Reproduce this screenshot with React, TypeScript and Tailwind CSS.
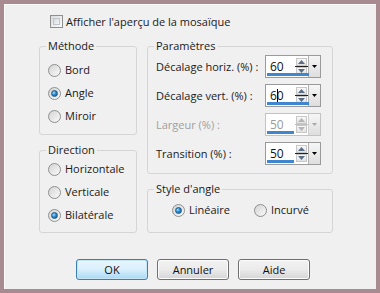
import React from "react";

const font = { fontFamily: '"Open Sans", "Noto Sans", sans-serif' };

function Radio({ checked, label, disabled }: { checked?: boolean; label: string; disabled?: boolean }) {
  return (
    <div className="flex items-center h-[16px]">
      <div className="w-[13px] h-[13px] rounded-full border border-[#8e8f8f] bg-gradient-to-br from-[#d4d4d4] to-[#fafafa] flex items-center justify-center shrink-0">
        {checked && (
          <div className="w-[7px] h-[7px] rounded-full bg-[radial-gradient(circle_at_35%_35%,#a8dcff_0%,#2c8bd0_45%,#0b4f82_100%)] border border-[#1d5a86]" />
        )}
      </div>
      <span className={`ml-[4px] text-[11px] leading-[16px] ${disabled ? "text-[#a0a0a0]" : "text-[#1a1a1a]"}`}>{label}</span>
    </div>
  );
}

function Spin({ value, bar, disabled, caret }: { value: string; bar: number; disabled?: boolean; caret?: boolean }) {
  const arrow = disabled ? "#b5b5b5" : "#5a6f86";
  return (
    <div className={`w-[56px] h-[23px] border ${disabled ? "border-[#c3c3c3]" : "border-[#9a9a9a]"} bg-white flex relative shrink-0`}>
      <div className="flex-1 relative">
        <span className={`absolute left-[4px] top-[3px] text-[12px] leading-[16px] ${disabled ? "text-[#9a9a9a]" : "text-[#111]"}`}>{value}</span>
        {caret && <div className="absolute left-[11px] top-[4px] w-[1px] h-[13px] bg-black" />}
        <div className="absolute left-[1px] bottom-[1px] h-[3px] bg-[#3f86d1]" style={{ width: bar }} />
      </div>
      <div className="w-[11px] flex flex-col justify-center mr-[1px] py-[2px]">
        <div className="flex-1 border border-[#c7c7c7] bg-gradient-to-b from-[#fafafa] to-[#e2e2e2] flex items-center justify-center">
          <svg width="7" height="4" viewBox="0 0 7 4"><path d="M0 4 L3.5 0 L7 4 Z" fill={arrow} /></svg>
        </div>
        <div className={`h-[1px] ${disabled ? "bg-[#c0c0c0]" : "bg-[#222]"} -mx-[1px]`} />
        <div className="flex-1 border border-[#c7c7c7] bg-gradient-to-b from-[#fafafa] to-[#e2e2e2] flex items-center justify-center">
          <svg width="7" height="4" viewBox="0 0 7 4"><path d="M0 0 L3.5 4 L7 0 Z" fill={arrow} /></svg>
        </div>
      </div>
      <div className={`w-[12px] border-l ${disabled ? "border-[#d0d0d0]" : "border-[#b0b0b0]"} bg-gradient-to-b from-[#f6f6f6] to-[#dedede] flex items-center justify-center`}>
        <svg width="5" height="3" viewBox="0 0 5 3"><path d="M0 0 L2.5 3 L5 0 Z" fill={disabled ? "#a8a8a8" : "#000"} /></svg>
      </div>
    </div>
  );
}

function Group({ title, className, inner, children }: { title: string; className: string; inner: string; children: React.ReactNode }) {
  return (
    <fieldset className={`border border-[#d5d5d5] rounded-[3px] ${className}`}>
      <legend className="ml-[6px] px-[2px] text-[11px] leading-[16px] text-[#1a1a1a]">{title}</legend>
      <div className={inner}>{children}</div>
    </fieldset>
  );
}

function Row({ label, disabled, children }: { label: string; disabled?: boolean; children: React.ReactNode }) {
  return (
    <div className="flex items-center justify-between h-[23px]">
      <span className={`text-[11px] leading-[16px] whitespace-nowrap ${disabled ? "text-[#a0a0a0]" : "text-[#1a1a1a]"}`}>{label}</span>
      {children}
    </div>
  );
}

function Button({ label, primary }: { label: string; primary?: boolean }) {
  return (
    <div
      className={`w-[72px] h-[21px] rounded-[3px] border flex items-center justify-center text-[11px] leading-[16px] text-[#111] ${
        primary
          ? "border-[#3c7fb1] bg-gradient-to-b from-[#eaf6fd] via-[#d9f0fc] to-[#a7d9f5] shadow-[inset_0_0_0_1px_#c4e5f6]"
          : "border-[#707070] bg-gradient-to-b from-[#f2f2f2] via-[#ebebeb] to-[#d5d5d5] shadow-[inset_0_0_0_1px_#fcfcfc]"
      }`}
    >
      {label}
    </div>
  );
}

export default function App() {
  return (
    <div className="w-[380px] h-[293px] bg-[#a88b90] p-[4px]" style={font}>
      <div className="w-full h-full bg-[#f0f0f0] border-t border-l border-[#fbfbfb] flex flex-col pl-[34px] pt-[10px]">
        <div className="flex items-center h-[13px] ml-[11px]">
          <div className="w-[13px] h-[13px] border border-[#8e8f8f] bg-gradient-to-br from-[#dcdcdc] to-[#fbfbfb] p-[2px]">
            <div className="w-full h-full border border-[#bfc5cb] bg-gradient-to-br from-[#d6dbe0] to-[#f4f5f6]" />
          </div>
          <span className="ml-[3px] text-[11px] leading-[16px] text-[#1a1a1a]">Afficher l'aperçu de la mosaïque</span>
        </div>

        <div className="flex gap-[10px] mt-[10px]">
          <div className="w-[98px] flex flex-col gap-[7px]">
            <Group title="Méthode" className="h-[97px]" inner="pl-[8px] pt-[8px] flex flex-col gap-[7px]">
              <Radio label="Bord" />
              <Radio label="Angle" checked />
              <Radio label="Miroir" />
            </Group>
            <Group title="Direction" className="h-[91px]" inner="pl-[8px] pt-[3px] flex flex-col gap-[7px]">
              <Radio label="Horizontale" />
              <Radio label="Verticale" />
              <Radio label="Bilatérale" checked />
            </Group>
          </div>
          <div className="w-[186px] flex flex-col gap-[7px]">
            <Group title="Paramètres" className="h-[136px]" inner="pl-[8px] pr-[11px] pt-[1px] flex flex-col gap-[6px]">
              <Row label="Décalage horiz. (%) :">
                <Spin value="60" bar={42} />
              </Row>
              <Row label="Décalage vert. (%) :">
                <Spin value="60" bar={42} caret />
              </Row>
              <Row label="Largeur (%) :" disabled>
                <Spin value="50" bar={27} disabled />
              </Row>
              <Row label="Transition (%) :">
                <Spin value="50" bar={27} />
              </Row>
            </Group>
            <Group title="Style d'angle" className="h-[52px]" inner="pl-[24px] pt-[5px] flex gap-[24px]">
              <Radio label="Linéaire" checked />
              <Radio label="Incurvé" />
            </Group>
          </div>
        </div>

        <div className="flex gap-[9px] ml-[37px] mt-[26px]">
          <Button label="OK" primary />
          <Button label="Annuler" />
          <Button label="Aide" />
        </div>
      </div>
    </div>
  );
}
